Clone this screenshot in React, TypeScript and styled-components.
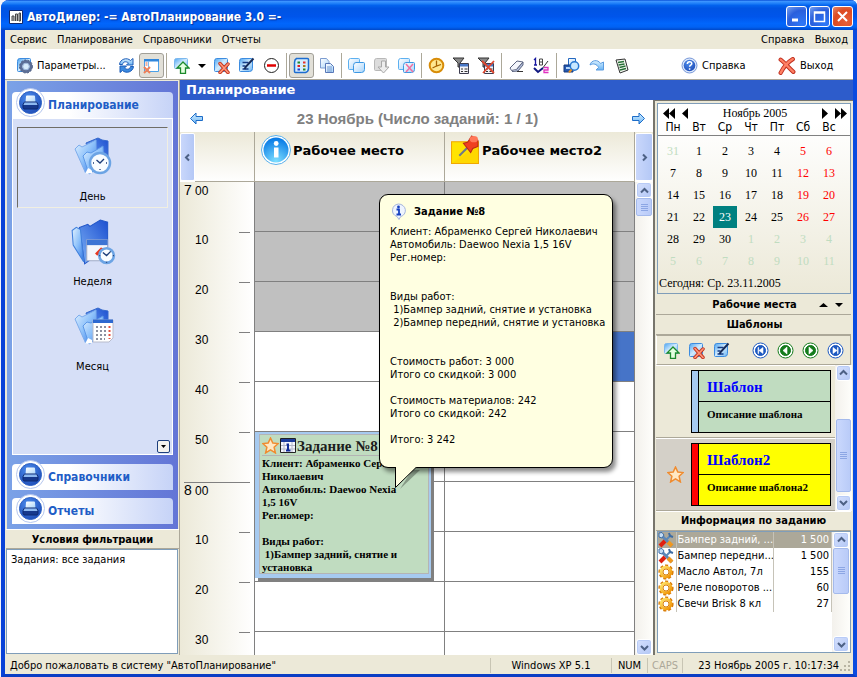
import React from "react";
import styled, { createGlobalStyle, css } from "styled-components";

const ui = '"DejaVu Sans Condensed", "Liberation Sans", sans-serif';
const wide = '"DejaVu Sans", sans-serif';
const serif = '"Liberation Serif", serif';

const Global = createGlobalStyle`
  * { box-sizing: border-box; }
  body { margin: 0; background: #f4f5fb; font: 11px/13px ${ui}; color: #000; }
  button { font: inherit; color: inherit; padding: 0; margin: 0; border: 0; background: none; }
  svg { display: block; flex: none; }
  table { border-collapse: collapse; }
`;

/* ---------- window frame ---------- */
const Frame = styled.div`
  min-height: 100vh;
  padding-left: 1px;
  display: flex;
`;
const Window = styled.div`
  flex: 1;
  min-width: 0;
  display: flex;
  flex-direction: column;
  border: solid #0a4be0;
  border-width: 0 4px 3px;
  border-left-color: #0842d8;
  border-bottom-color: #0a3ec4;
  border-radius: 8px 6px 0 0;
  background: #ece9d8;
`;
const TitleBar = styled.header`
  height: 30px;
  margin: 0 -4px;
  padding: 3px 4px 0 8px;
  display: flex;
  align-items: center;
  gap: 4px;
  border-radius: 8px 6px 0 0;
  background: linear-gradient(#0a50d8 0, #3a93ff 5%, #1c7df8 12%, #0262ee 18%, #0054e3 28%, #0055eb 56%, #0166fc 78%, #0162f4 90%, #0048c8 100%);
`;
const Title = styled.h1`
  flex: 1;
  margin: 0;
  font: bold 12px/16px ${ui};
  color: #fff;
  text-shadow: 1px 1px 1px #04309a;
  white-space: nowrap;
`;
const WinButtons = styled.div`
  display: flex;
  gap: 2px;
`;
const WinButton = styled.button<{ $close?: boolean }>`
  width: 21px;
  height: 21px;
  border: 1px solid #fff;
  border-radius: 3px;
  display: grid;
  place-items: center;
  background: ${p => p.$close
    ? "radial-gradient(circle at 70% 80%, #e8603a, #dd4a20 60%, #e48a6c)"
    : "radial-gradient(circle at 80% 90%, #2e78f8, #2a5fdc 60%, #7aa2f0)"};
`;
const MenuBar = styled.nav`
  height: 19px;
  padding: 0 5px;
  display: flex;
  align-items: center;
  gap: 10px;
`;
const MenuItem = styled.button`
  line-height: 17px;
`;
const Spacer = styled.span`
  flex: 1;
`;
const ToolBar = styled.div`
  height: 31px;
  padding: 3px 0 0 6px;
  display: flex;
  align-items: center;
  background: #fff;
  border-bottom: 1px solid #aca899;
  white-space: nowrap;
`;
const Tool = styled.button<{ $on?: boolean }>`
  width: 25px;
  height: 25px;
  flex: none;
  display: grid;
  place-items: center;
  ${p => p.$on && css`
    border: 1px solid #a19f97;
    border-radius: 3px;
    background: #e2e0d8;
  `}
`;
const Caret = styled.button`
  width: 15px;
  height: 25px;
  display: grid;
  place-items: center;
`;
const TextTool = styled.button<{ $w: number; $gap?: number }>`
  width: ${p => p.$w}px;
  margin-left: ${p => p.$gap ?? 0}px;
  display: flex;
  align-items: center;
  gap: 4px;
`;
const Sep = styled.span`
  width: 1px;
  height: 25px;
  margin: 0 2px;
  background: #aca899;
`;

const Main = styled.main`
  flex: 1;
  display: flex;
  min-height: 0;
`;

/* ---------- left column ---------- */
const Left = styled.aside`
  width: 175px;
  flex: none;
  padding: 1px 0 1px 1px;
  border-right: 1px solid #aca899;
  display: flex;
  flex-direction: column;
`;
const NavPane = styled.nav`
  margin: 0 1px;
  padding: 11px 5px 5px;
  display: flex;
  flex-direction: column;
  background: linear-gradient(90deg, #7ba2e7, #6375d6);
  height: 448px;
`;
const GroupHead = styled.button<{ $gap?: number }>`
  height: 26px;
  flex: none;
  margin-top: ${p => p.$gap ?? 0}px;
  padding-left: 4px;
  display: flex;
  align-items: center;
  gap: 3px;
  border-radius: 4px 4px 0 0;
  background: linear-gradient(90deg, #fff 35%, #c6d3f7);
  font: bold 12px/14px ${ui};
  color: #215dc6;
  svg { margin: -8px 0 -2px; }
`;
const GroupBody = styled.div`
  flex: 1;
  padding: 8px 4px 1px;
  border: 1px solid #fff;
  background: #d6dff7;
  display: flex;
  flex-direction: column;
  gap: 4px;
`;
const NavItem = styled.button<{ $on?: boolean }>`
  height: 81px;
  padding-bottom: 1px;
  display: grid;
  grid-template-rows: 1fr 20px;
  justify-items: center;
  align-items: center;
  border: 1px solid transparent;
  ${p => p.$on && css`border-color: #6f6d66 #f1efe2 #f1efe2 #6f6d66;`}
`;
const More = styled.button`
  width: 13px;
  height: 13px;
  margin: auto -2px 0 0;
  align-self: flex-end;
  border: 1px solid #1d3f7c;
  border-radius: 2px;
  background: #f4f3ee;
  display: grid;
  place-items: center;
`;
const PaneTitle = styled.label`
  display: flex;
  align-items: center;
  justify-content: center;
  height: 20px;
  margin: 0;
  flex: none;
  font: bold 11px/13px ${ui};
  border-top: 1px solid #fff;
  border-bottom: 1px solid #aca899;
`;
const Memo = styled.textarea`
  flex: 1;
  margin: 0 1px 0 0;
  padding: 3px 4px;
  resize: none;
  border: 1px solid #7f9db9;
  background: #fff;
  color: #000;
  font: 11px/13px ${ui};
  outline: 0;
`;

/* ---------- planner ---------- */
const Work = styled.div`
  flex: 1;
  min-width: 0;
  display: flex;
  flex-direction: column;
`;
const Banner = styled.h2`
  margin: 0;
  height: 20px;
  padding-left: 6px;
  background: #2d5ccb;
  color: #fff;
  font: bold 13px/20px ${wide};
`;
const WorkBody = styled.div`
  flex: 1;
  display: flex;
`;
const Planner = styled.section`
  flex: 1;
  min-width: 0;
  display: flex;
  flex-direction: column;
  background: #fff;
`;
const DateRow = styled.div`
  height: 32px;
  padding: 5px 8px 0 10px;
  display: flex;
  align-items: center;
  justify-content: space-between;
`;
const DateTitle = styled.h3`
  margin: 0;
  font: bold 15px/16px "Liberation Sans", sans-serif;
  color: #808080;
`;
const HeadRow = styled.div`
  height: 50px;
  flex: none;
  display: flex;
  background: linear-gradient(#ece9d8, #fff);
`;
const SideArrow = styled.button<{ $w: number }>`
  width: ${p => p.$w}px;
  flex: none;
  margin: 1px 0;
  border: 1px solid #fff;
  border-radius: 2px;
  background: linear-gradient(90deg, #c9d7fb, #b4c8f6);
  display: grid;
  place-items: center;
`;
const HeadCell = styled.div<{ $w?: number }>`
  ${p => p.$w ? css`width: ${p.$w}px; flex: none;` : css`flex: 1 1 0; min-width: 0;`}
  padding: 3px 5px 0 6px;
  display: flex;
  gap: 2px;
  border-right: 1px solid #aca899;
  border-bottom: 1px solid #aca899;
  font: bold 13px/32px ${wide};
  white-space: nowrap;
`;
const Schedule = styled.div`
  flex: 1 1 0;
  min-height: 0;
  display: flex;
`;
const Ruler = styled.div`
  width: 75px;
  flex: none;
  padding: 0 4px 0 4px;
  overflow: hidden;
  background: linear-gradient(90deg, #ece9d8, #fff);
  border-right: 1px solid #808080;
`;
const Mark = styled.div<{ $hour?: boolean; $first?: boolean }>`
  height: 50px;
  padding: 1px 0 0 ${p => (p.$hour ? 0 : 11)}px;
  font: 12px/14px "Liberation Sans", sans-serif;
  background: linear-gradient(#808080, #808080) no-repeat right top;
  background-size: ${p => (p.$first ? "0 0" : p.$hour ? "66px 1px" : "11px 1px")};
`;
const HourNo = styled.span`
  display: inline-block;
  width: 11px;
  font-size: 14px;
`;
const Grid = styled.div`
  flex: 1;
  min-width: 0;
  display: flex;
  position: relative;
`;
const Lane = styled.div`
  flex: 1 1 0;
  min-width: 0;
  height: 100%;
  overflow: hidden;
  border-right: 1px solid #808080;
`;
const Slot = styled.div<{ $bg?: string }>`
  height: 50px;
  border-bottom: 1px solid #808080;
  background: ${p => p.$bg ?? "#fff"};
`;
const Task = styled.article`
  position: absolute;
  left: 0;
  top: 250px;
  width: 176px;
  height: 146px;
  padding: 2px 2px 4px 4px;
  background: #a6caf0;
  box-shadow: 3px 3px 0 #808080;
  font: bold 11px/13px ${serif};
`;
const TaskCard = styled.div`
  height: 100%;
  padding: 1px 2px;
  border: 1px solid #b4b4b4;
  background: #c0dcc0;
  white-space: pre-wrap;
  overflow: hidden;
`;
const TaskHead = styled.h4`
  margin: 0 0 1px;
  height: 20px;
  display: flex;
  align-items: center;
  gap: 1px;
  border-bottom: 1px solid #b4b4b4;
  font: bold 15px/18px ${serif};
  color: #1c1c1c;
  white-space: nowrap;
`;
const Tip = styled.div`
  position: absolute;
  left: 124px;
  top: 12px;
  width: 234px;
  padding: 8px 0 21px 10px;
  border: 1px solid #000;
  border-radius: 9px;
  background: #ffffe1;
  box-shadow: 3px 4px 4px rgba(0, 0, 0, 0.45);
  white-space: pre;
  p { margin: 0; }
`;
const TipHead = styled.h4`
  margin: 0 0 6px;
  height: 16px;
  display: flex;
  align-items: center;
  gap: 7px;
  font: bold 11px/13px ${ui};
`;
const TipTail = styled.svg`
  position: absolute;
  left: 15px;
  top: 100%;
`;

/* ---------- scroll bars ---------- */
const Scroll = styled.div<{ $w: number }>`
  width: ${p => p.$w}px;
  flex: none;
  padding: 0 1px;
  display: flex;
  flex-direction: column;
  background: linear-gradient(90deg, #f3f1ec, #fefefb);
`;
const ScrollButton = styled.button`
  height: 16px;
  flex: none;
  border: 1px solid #fff;
  border-radius: 3px;
  background: linear-gradient(135deg, #d5e0fd, #b4c8f6);
  box-shadow: inset 0 0 0 1px #b8cbf6;
  display: grid;
  place-items: center;
`;
const Thumb = styled.div<{ $h: number }>`
  height: ${p => p.$h}px;
  border: 1px solid #a4baec;
  border-radius: 2px;
  background: linear-gradient(90deg, #cad8fd, #b9cbf8);
  display: grid;
  place-items: center;
`;
const Track = styled.div<{ $top: number }>`
  flex: 1;
  padding-top: ${p => p.$top}px;
`;

/* ---------- right column ---------- */
const Right = styled.aside`
  width: 200px;
  flex: none;
  padding: 1px 2px 2px 1px;
  border: solid #77756c;
  border-width: 1px 0 0 2px;
  display: flex;
  flex-direction: column;
  background: #ece9d8;
`;
const Calendar = styled.section`
  margin: 1px 0 1px 1px;
  border: 1px solid #7f9db9;
  background: linear-gradient(#fff 10%, #ece9d8);
  font: 12px/14px ${serif};
`;
const CalHead = styled.div`
  height: 16px;
  padding: 2px 3px 0 5px;
  display: flex;
  align-items: center;
  gap: 7px;
`;
const Month = styled.span`
  flex: 1;
  text-align: center;
`;
const Days = styled.table`
  width: 100%;
  table-layout: fixed;
  text-align: center;
  th { height: 15px; padding: 0; font: 12px/14px ${ui}; }
  thead { border-bottom: 1px solid #808080; }
  tbody::before { content: ""; display: block; height: 4px; }
  td { height: 22px; padding: 0; }
  th:first-child { width: 28px; }
  th:last-child { width: 34px; }
  th:first-child, td:first-child { padding-left: 2px; }
  th:last-child, td:last-child { padding-right: 8px; }
`;
const Day = styled.button<{ $kind: string }>`
  width: 24px;
  height: 22px;
  font: 12px/22px ${serif};
  color: ${p => ({ out: "#c0dcc0", off: "#f00", on: "#fff" } as Record<string, string>)[p.$kind] ?? "#000"};
  ${p => p.$kind === "on" && css`background: #008080;`}
`;
const Today = styled.div`
  padding: 4px 0 3px 1px;
`;
const Bar = styled.div`
  height: 20px;
  flex: none;
  padding: 1px 0 0 2px;
  display: grid;
  grid-template-columns: 32px 1fr 32px;
  align-items: center;
  text-align: center;
  font: bold 11px/13px ${ui};
  border-bottom: 1px solid #aca899;
`;
const Arrows = styled.span`
  display: flex;
  gap: 7px;
`;
const Tools = styled.div`
  height: 30px;
  flex: none;
  padding: 1px 2px 0;
  display: flex;
  align-items: center;
  border: 1px solid #aca899;
  border-left-color: #fff;
`;
const Templates = styled.div`
  height: 146px;
  flex: none;
  display: flex;
`;
const TemplateList = styled.ul`
  flex: 1;
  margin: 0;
  padding: 0;
  list-style: none;
`;
const Template = styled.li<{ $on?: boolean }>`
  height: 73px;
  padding: 0 4px 0 11px;
  display: grid;
  grid-template-columns: 24px 140px;
  align-items: center;
  border-bottom: 1px solid #aca899;
  border-top: 1px solid #fff;
  background: ${p => (p.$on ? "#d4d0c8" : "#ece9d8")};
`;
const Card = styled.article<{ $bar: string; $bg: string }>`
  grid-column: 2;
  height: 63px;
  display: grid;
  grid-template-rows: 31px 1fr;
  border: 1px solid #000;
  border-left: 0;
  background: ${p => p.$bg};
  box-shadow: inset 1px 0 #000, inset 7px 0 ${p => p.$bar}, inset 8px 0 #000;
`;
const CardTitle = styled.h4`
  margin: 0 0 0 8px;
  padding: 7px 0 0 8px;
  border-bottom: 1px solid #000;
  font: bold 15px/18px ${serif};
  color: #00f;
`;
const CardNote = styled.p`
  margin: 0 0 0 16px;
  padding-top: 6px;
  font: bold 11px/13px ${serif};
`;
const InfoBox = styled.div`
  flex: 1;
  margin-left: 1px;
  display: flex;
  border: 1px solid #7f9db9;
  background: #fff;
`;
const InfoArea = styled.div`
  flex: 1;
`;
const Info = styled.table`
  width: 100%;
  table-layout: fixed;
  td {
    height: 16px;
    padding: 0 2px;
    border-right: 1px solid #c6c3b8;
    white-space: nowrap;
    overflow: hidden;
  }
  td:first-child { width: 18px; padding: 0; }
  td:nth-child(2) { padding: 0 0 0 1px; }
  td:last-child { width: 58px; text-align: right; }
`;
const InfoRow = styled.tr<{ $on?: boolean }>`
  ${p => p.$on && css`background: #aca899; color: #fff;`}
`;
const Status = styled.footer`
  height: 19px;
  flex: none;
  padding: 2px 1px 0 5px;
  display: flex;
  align-items: center;
  white-space: nowrap;
`;
const Panel = styled.span<{ $w?: number; $dim?: boolean; $end?: boolean }>`
  ${p => p.$w ? css`width: ${p.$w}px;` : css`flex: 1;`}
  text-align: ${p => (p.$end ? "right" : p.$w ? "center" : "left")};
  line-height: 15px;
  color: ${p => (p.$dim ? "#aca899" : "#000")};
  border-right: ${p => (p.$end ? "0" : "1px solid #c8c5b4")};
`;

/* ---------- icons ---------- */
const Defs = () => (
  <svg width="0" height="0" style={{ position: "absolute" }} aria-hidden="true">
    <defs>
      <linearGradient id="doc" x1="0" y1="0" x2="1" y2="1"><stop offset="0" stopColor="#4ba4f2" /><stop offset="0.5" stopColor="#d2ebfd" /><stop offset="1" stopColor="#6ab4f4" /></linearGradient>
      <linearGradient id="page" x1="0" y1="0" x2="1" y2="1"><stop offset="0" stopColor="#fff" /><stop offset="1" stopColor="#a8d4fa" /></linearGradient>
      <linearGradient id="folder" x1="0" y1="0" x2="1" y2="1"><stop offset="0" stopColor="#e2f2ff" /><stop offset="0.5" stopColor="#8cc0fa" /><stop offset="1" stopColor="#2f74e4" /></linearGradient>
      <linearGradient id="folderDark" x1="0" y1="1" x2="1" y2="0"><stop offset="0" stopColor="#7eb2f6" /><stop offset="1" stopColor="#1c4fd0" /></linearGradient>
      <radialGradient id="ball" cx="0.4" cy="0.3" r="0.8"><stop offset="0" stopColor="#4c8cec" /><stop offset="1" stopColor="#1a48b4" /></radialGradient>
      <radialGradient id="info" cx="0.5" cy="0.95" r="0.9"><stop offset="0" stopColor="#7fe0ff" /><stop offset="1" stopColor="#0a7ce6" /></radialGradient>
      <linearGradient id="gold" x1="0" y1="0" x2="1" y2="1"><stop offset="0" stopColor="#ffe66a" /><stop offset="1" stopColor="#f09000" /></linearGradient>
      <linearGradient id="arrow" x1="0" y1="0" x2="0" y2="1"><stop offset="0" stopColor="#d8f0ff" /><stop offset="1" stopColor="#6ab4f4" /></linearGradient>
    </defs>
  </svg>
);
const I = ({ s = 17, v = 17, children }: { s?: number; v?: number; children: React.ReactNode }) => (
  <svg width={s} height={s} viewBox={`0 0 ${v} ${v}`} fill="none" aria-hidden="true">{children}</svg>
);
const docShape = <path d="M3.500 1.500h10q1 0 1 1v9q0 3-3 3h-9q-1 0-1-1v-9q0-3 2-3z" fill="url(#doc)" stroke="#3c8ce0" />;
const redX = <g strokeLinecap="round"><path d="M7 6.500l8 9M15 7l-8 8.500" stroke="#c03018" strokeWidth="3.400" /><path d="M7 6.500l8 9M15 7l-8 8.500" stroke="#ff9478" strokeWidth="1.800" /></g>;

const AddIcon = () => <I><path d="M3.500 1.500h10q1 0 1 1v9h-12q-1 0-1-1v-7q0-2 2-2z" fill="url(#doc)" stroke="#7cb8ee" /><path d="M10 5l6 6h-3.500v5.500h-5V11H4z" fill="#e4ffe0" stroke="#1c8a2c" strokeWidth="1.300" /></I>;
const DeleteIcon = () => <I>{docShape}{redX}</I>;
const EditIcon = () => <I>{docShape}<path d="M4.500 5.500h6M4.500 12h6M4.500 9h3" stroke="#153c88" strokeWidth="1.300" /><path d="M15.500 1.500l-7.500 8-1.500 2.500" stroke="#152a58" strokeWidth="2" /></I>;
const GearIcon = () => <I>{docShape}<circle cx="10" cy="9.500" r="5" stroke="#5c6e96" strokeWidth="3" /><circle cx="10" cy="9.500" r="6.500" stroke="#46587e" strokeDasharray="2 1.500" /><circle cx="10" cy="9.500" r="3.300" fill="#d8ecfc" stroke="#9cb4d8" /></I>;
const RefreshIcon = () => <I><path d="M1.500 7.500C2 2 9 0 12.500 3.500L15 1.500V8H8.500L10.500 6C8 4 5 4.500 4.500 7.500z" fill="url(#arrow)" stroke="#1c5cb8" /><path d="M15.500 9.500C15 15 8 17 4.500 13.500L2 15.500V9h6.500L6.500 11C9 13 12 12.500 12.500 9.500z" fill="#3a8ae0" stroke="#1c5cb8" /></I>;
const PaneIcon = () => <I><path d="M1.500 2.500h14v12h-14z" fill="#fff" stroke="#4aa0e8" /><path d="M1 2h15v2.500H1z" fill="#2f86dc" /><path d="M5.500 4v10" stroke="#80b8ec" /><path d="M2.500 6h2M2.500 8h2" stroke="#e06040" /><path d="M1 10l6 6M7 10l-6 6" stroke="#f08058" strokeWidth="2" /></I>;
const MinusIcon = () => <I><circle cx="8.500" cy="8.500" r="7" fill="#fff" stroke="#222" /><path d="M4 8.500h9" stroke="#e00000" strokeWidth="2.500" /></I>;
const ListIcon = () => <I><path d="M3.500 1.500h11q1 0 1 1v9q0 3-3 4h-10q-1 0-1-1v-9q0-3 2-4z" fill="#d4ecff" stroke="#1c6cd0" strokeWidth="1.500" /><path d="M4.500 4.500h2.500v2H4.500zM10 11.500h2.500v2H10z" fill="#208830" /><path d="M4.500 8h2.500v2H4.500z" fill="#e02020" /><path d="M10 4.500h2.500v2H10z" fill="#e83030" /><path d="M10 8h2.500v2H10z" fill="#b07820" /><path d="M4.500 11.500h2.500v2H4.500z" fill="#2040d0" /></I>;
const PagesIcon = () => <I><path d="M2.500 1.500h6l2.500 3V11H2.500z" fill="url(#page)" stroke="#7c9cd0" /><path d="M7.500 6.500h5l3 3v6h-8z" fill="url(#page)" stroke="#5878b8" /><path d="M9 10h5M9 12h5M9 14h5" stroke="#7098d0" /></I>;
const copyShape = <><path d="M2.500 1.500h8q1 0 1 1v7q0 3-3 3h-7q-1 0-1-1V4q0-2.500 2-2.500z" fill="url(#page)" stroke="#5cb0f0" /><path d="M8 5.500h7.500q1 0 1 1v6q0 3-3 3h-7q-1 0-1-1v-6q0-3 2.500-3z" fill="url(#page)" stroke="#3c98e4" /></>;
const CopyIcon = () => <I>{copyShape}</I>;
const CopyXIcon = () => <I>{copyShape}<path d="M8 7l7 8M15 7l-7 8" stroke="#f070a0" strokeWidth="1.500" /></I>;
const DownIcon = () => <I><path d="M3.500 1.500h9q1 0 1 1v8q0 3-3 3h-8q-1 0-1-1V4q0-2.500 2-2.500z" fill="#dcdcdc" stroke="#b8b8b8" /><path d="M8.500 4h4v6H16l-5.500 6L5 10h3.500z" fill="#ededed" stroke="#a8a8a8" /></I>;
const ClockIcon = () => <I><circle cx="8.500" cy="8.500" r="6.800" fill="#ffe890" stroke="#d88c08" strokeWidth="2" /><path d="M8.500 3.500v5.500l4.500-1.500M8.500 9l-4 2" stroke="#a86400" strokeWidth="1.300" /></I>;
const filterShape = <><path d="M0 1h11L7 6v4H5V6z" fill="#888" stroke="#333" /><path d="M6.500 6.500h9v10h-9z" fill="#f4f4f8" stroke="#3c3c50" /><path d="M7 7h8v2.500H7z" fill="#4878c8" /><path d="M8 12h2M11.500 12h3M8 14.500h2M11.500 14.500h3" stroke="#333" /></>;
const FilterIcon = () => <I>{filterShape}</I>;
const FilterXIcon = () => <I>{filterShape}<path d="M4 4l12 12M16 4L5 16" stroke="#e04830" strokeWidth="1.800" /></I>;
const EraserIcon = () => <I><path d="M2 11l7-7 6 1-6.500 7.500-5 1z" fill="#f4f6fc" stroke="#5c6480" /><path d="M8.500 12.500L15 5v3l-5 6-6 .5" fill="#b4c0dc" stroke="#5c6480" /><path d="M9 14.500h6" stroke="#333" /></I>;
const NumbersIcon = () => <I><path d="M1 3l1.500-1.500V8M1 8h3" stroke="#1818a0" strokeWidth="1.300" /><path d="M6.500 2h3v6h-3zM6.500 5h3" stroke="#444" /><path d="M15 4L9 12" stroke="#333" /><path d="M1 11l4 4 5-4" stroke="#101880" strokeWidth="2" /><path d="M11 10.500h4v2.500h-4v2.500h4.500" stroke="#e030c0" strokeWidth="1.300" /></I>;
const SearchIcon = () => <I><path d="M5.500 1.500h7v7h-7z" fill="url(#page)" stroke="#2468c0" /><path d="M1 8h9v7H1z" fill="#2458b0" stroke="#14387c" /><path d="M3 11h5" stroke="#b8d8fc" strokeWidth="2" /><circle cx="11.500" cy="9" r="4.200" fill="#c8e8ff" stroke="#2878d0" strokeWidth="1.500" /><path d="M8.500 12.500L6 15.500" stroke="#e89020" strokeWidth="2" /></I>;
const RedoIcon = () => <I><path d="M2 8c1-5 8-6 10.500-1.500L15.500 5v8H8l2.500-2.500C9 7 5 6 2 8z" fill="url(#arrow)" stroke="#5c9ce0" /></I>;
const SheetIcon = () => <I><path d="M3 3l9-1 3 11-8 3z" fill="#f4f8f0" stroke="#333" /><path d="M5 5.500l6-1M5.500 8l6-1M6.500 10.500l6-1.500M7 13l6-1.500" stroke="#287038" strokeWidth="1.300" /></I>;
const HelpIcon = () => <I><circle cx="8.500" cy="8.500" r="7.500" fill="#dce8fc" stroke="#7898d8" /><circle cx="8.500" cy="8.500" r="5.800" fill="url(#ball)" /><path d="M6.300 7c0-3 4.500-3 4.500-.4 0 1.600-2.200 1.600-2.200 3.200M8.600 11.200v1.500" stroke="#fff" strokeWidth="1.500" /></I>;
const CloseIcon = () => <I s={18}><g strokeLinecap="round"><path d="M2.500 2.500c4 3 8 8 12 11.500M14 2C9 5 5 10 2.500 15" stroke="#c03020" strokeWidth="4" /><path d="M2.500 2.500c4 3 8 8 12 11.500M14 2C9 5 5 10 2.500 15" stroke="#ff8064" strokeWidth="2.200" /></g></I>;
const Tri = ({ d = "M0 0h8L4 4z", w = 8, h = 4 }: { d?: string; w?: number; h?: number }) => <svg width={w} height={h} viewBox={`0 0 ${w} ${h}`} aria-hidden="true"><path d={d} /></svg>;
const Chevron = ({ d }: { d: string }) => <I s={9} v={9}><path d={d} stroke="#4d6185" strokeWidth="2" /></I>;
const UP = "M1 6.500l3.500-3.500L8 6.500", DOWN = "M1 3l3.500 3.500L8 3", LEFT = "M6 1.500L3 4.500l3 3", RIGHT = "M3 1.500l3 3-3 3";
const Grip = () => <I s={7} v={7}><path d="M0 .5h7M0 2.500h7M0 4.500h7M0 6.500h7" stroke="#8ca6e4" /></I>;
const BlueArrow = ({ flip }: { flip?: boolean }) => (
  <svg width="13" height="13" viewBox="0 0 13 13" aria-hidden="true"><path d={flip ? "M12.500 6.500L7 1v3.500H.5v4H7V12z" : "M.5 6.500L6 1v3.500h6.500v4H6V12z"} fill="url(#arrow)" stroke="#1c6cc8" /></svg>
);
const Printer = () => (
  <I s={29} v={29}>
    <circle cx="14.500" cy="14.500" r="14" fill="#fff" stroke="#b4c6ee" />
    <circle cx="14.500" cy="14.500" r="11" fill="url(#ball)" stroke="#2c60c4" />
    <path d="M11 7.500h7q1 0 1 1l.5 6h-10l.5-6q0-1 1-1z" fill="url(#page)" />
    <path d="M8.500 14h12l1.500 2.500v3l-1 1.500H8l-1-1.500v-3z" fill="#16388c" stroke="#0c2870" />
    <path d="M8.500 14.500h12l1 2.500h-14z" fill="#8cb8f0" />
  </I>
);
const folderShape = <>
  <path d="M14 7l12-5 4 2 6 1v16L22 34z" fill="url(#folderDark)" stroke="#3468cc" />
  <path d="M3 13l4-4 3 2 14-7v20L14 38z" fill="url(#folder)" stroke="#7cacec" />
  <path d="M11 20l4-4 4 1 12-7 1 18-15 10z" fill="url(#folder)" stroke="#5c98e8" />
  <path d="M13 38l3-6 4 2v3z" fill="#fff" />
</>;
const dial = (x: number, y: number, r: number) => <><circle cx={x} cy={y} r={r} fill="#f8fcff" stroke="#6ca4e4" strokeWidth="2.500" /><path d={`M${x - 3.500} ${y - 3}l3.500 3 4-4M${x - 7} ${y}h1M${x + 6} ${y}h1M${x} ${y + 6}v1`} stroke="#1c3c78" strokeWidth="1.300" /></>;
const DayIcon = () => <I s={42} v={42}>{folderShape}{dial(28, 27, 10)}</I>;
const WeekIcon = () => <svg width="46" height="48" viewBox="0 0 44 46" fill="none" aria-hidden="true"><path d="M9 9l8-3 2 2 10-6 7 2v24L14 44z" fill="url(#folderDark)" stroke="#2458c8" /><path d="M2 12l4-3 4 2 3 31L3 26z" fill="url(#folder)" stroke="#4080dc" /><path d="M16 21h20v20H16z" fill="#f4f6fc" stroke="#a0acc8" /><path d="M16 21h20v5H16z" fill="#3c74d4" /><path d="M25 35l5-5 3 1M27 35h5" stroke="#e83820" strokeWidth="3" />{dial(35, 36, 7)}</svg>;
const MonthIcon = () => <I s={42} v={42}>{folderShape}<path d="M21 14h20v18l-4 4H21z" fill="#fff" stroke="#b8bccc" /><path d="M21 13.500h20V17H21z" fill="#2c68d0" /><path d="M24 21h12M24 25h12M24 29h12M24 33h9" stroke="#8c90a0" strokeWidth="2" strokeDasharray="2 2" /><path d="M37.500 20v13" stroke="#e85040" strokeWidth="2" strokeDasharray="2 2" /></I>;
const InfoIcon = () => <I s={30} v={30}><circle cx="15" cy="15" r="14.500" fill="#fff" stroke="#58b0ec" /><circle cx="15" cy="15" r="12.500" fill="url(#info)" /><path d="M13 12.500h4.500v10H13z" fill="#fff" /><circle cx="15.200" cy="8.500" r="2.400" fill="#fff" /></I>;
const PinIcon = () => <I s={29} v={28}><path d="M.5 6.500h26v21H.5z" fill="#ffe400" stroke="#f0a800" /><path d="M1 27L26 10v17z" fill="#ffd000" opacity="0.600" /><path d="M8 20l8-8" stroke="#707888" strokeWidth="2" /><path d="M12 8l4-1 4-6 6 4v6l-5 2-2 4z" fill="#f04020" stroke="#b82818" /><ellipse cx="22" cy="4" rx="4" ry="3" fill="#ff7858" /></I>;
const Star = () => <I s={17} v={16}><path d="M8 1l2.200 4.700 5 .5-3.800 3.400L12.600 15 8 12.200 3.400 15l1.200-5.400L.8 6.200l5-.5z" fill="#ffe8c4" stroke="#f08c30" strokeWidth="1.400" /></I>;
const OneIcon = () => <I s={16} v={16}><path d="M.5.500h15v14H.5z" fill="#f4f6ff" stroke="#222" /><path d="M1 1h14v3H1z" fill="#1c3c9c" /><path d="M1 7.500h14M1 11h14M4 4v10M12 4v10" stroke="#b4b8c8" /><path d="M6.500 6.500H8V12M6 12.500h4.500" stroke="#102c98" strokeWidth="2" /></I>;
const BubbleIcon = () => <I s={17}><path d="M8.500 1a7 6.500 0 0 1 2 12.700L9 16.500l-2-3A7 6.500 0 0 1 8.500 1z" fill="#eef4ff" stroke="#a4b4dc" /><circle cx="8.500" cy="4" r="1.400" fill="#1440c0" /><path d="M6.500 6.500h2.500v5M6.500 11.500h4.500" stroke="#1440c0" strokeWidth="1.800" /></I>;
const ToolsIcon = () => <I s={16} v={16}><path d="M2 2l12 12" stroke="#5c88b8" strokeWidth="3" /><path d="M1 1l3-.5L6 3 4 6 1 5z" fill="#c4dcf4" stroke="#3c6ca4" /><path d="M13 3l-5 5" stroke="#5c88b8" strokeWidth="2" /><path d="M11 1l1 3 3 1" stroke="#3c6ca4" strokeWidth="2" /><path d="M7 9l-5 5" stroke="#e02010" strokeWidth="4" /><path d="M10 10l4 4" stroke="#f09820" strokeWidth="4" /></I>;
const CogIcon = () => <I s={16} v={16}><circle cx="8" cy="8" r="6.600" stroke="#d87c08" strokeWidth="2" strokeDasharray="3 2" /><circle cx="8" cy="8" r="4.800" stroke="url(#gold)" strokeWidth="3" /><circle cx="8" cy="8" r="3" fill="#fff" stroke="#d88010" /></I>;
const Media = ({ c, d }: { c: string; d: string }) => <I><circle cx="8.500" cy="8.500" r="7.500" fill="#fff" stroke={c} /><circle cx="8.500" cy="8.500" r="5" fill={c} stroke={c} /><path d={d} fill="#fff" stroke="#fff" strokeWidth="0.600" /></I>;

/* ---------- data ---------- */
const marks = ["7", "10", "20", "30", "40", "50", "8", "10", "20", "30"];
const weekdays = ["Пн", "Вт", "Ср", "Чт", "Пт", "Сб", "Вс"];
const weeks = Array.from({ length: 6 }, (_, w) =>
  Array.from({ length: 7 }, (_, d) => {
    const n = w * 7 + d;
    const day = n === 0 ? 31 : n > 30 ? n - 30 : n;
    const kind = n === 0 || n > 30 ? "out" : n === 23 ? "on" : d > 4 ? "off" : "day";
    return { day, kind };
  }));
const works = [
  { name: "Бампер задний, ...", sum: "1 500", icon: <ToolsIcon />, on: true },
  { name: "Бампер передни...", sum: "1 500", icon: <ToolsIcon /> },
  { name: "Масло Автол, 7л", sum: "155", icon: <CogIcon /> },
  { name: "Реле поворотов ...", sum: "60", icon: <CogIcon /> },
  { name: "Свечи Brisk 8 кл", sum: "27", icon: <CogIcon /> },
];
const taskText = "Клиент: Абраменко Сергей Николаевич\nАвтомобиль: Daewoo Nexia\n1,5 16V\nРег.номер:\n\nВиды работ:\n 1)Бампер задний, снятие и установка";
const tipText = "Клиент: Абраменко Сергей Николаевич\nАвтомобиль: Daewoo Nexia 1,5 16V\nРег.номер:\n\n\nВиды работ:\n 1)Бампер задний, снятие и установка\n 2)Бампер передний, снятие и установка\n\n\nСтоимость работ: 3 000\nИтого со скидкой: 3 000\n\nСтоимость материалов: 242\nИтого со скидкой: 242\n\nИтого: 3 242";

const ScrollBar = ({ w, top, thumb }: { w: number; top: number; thumb: number }) => (
  <Scroll $w={w}>
    <ScrollButton aria-label="Вверх"><Chevron d={UP} /></ScrollButton>
    <Track $top={top}><Thumb $h={thumb}><Grip /></Thumb></Track>
    <ScrollButton aria-label="Вниз"><Chevron d={DOWN} /></ScrollButton>
  </Scroll>
);
const T = ({ label, on, children }: { label: string; on?: boolean; children: React.ReactNode }) => (
  <Tool $on={on} aria-label={label} aria-pressed={on}>{children}</Tool>
);

export default function App() {
  return (
    <Frame>
      <Global />
      <Defs />
      <Window>
        <TitleBar>
          <I s={14} v={14}><path d="M.5.500h13v13H.5z" fill="#fff" stroke="#10286c" /><path d="M3 11V6h2v5M6.500 11V4h2v7M10 11V3h1.500v8z" fill="#b8b8b8" stroke="#444" /></I>
          <Title>АвтоДилер: -= АвтоПланирование 3.0 =-</Title>
          <WinButtons>
            <WinButton aria-label="Свернуть"><I s={13} v={13}><path d="M2 10h6" stroke="#fff" strokeWidth="3" /></I></WinButton>
            <WinButton aria-label="Развернуть"><I s={13} v={13}><path d="M1.500 2h10v9.500h-10zM1 3h11" stroke="#fff" strokeWidth="1.500" /></I></WinButton>
            <WinButton $close aria-label="Закрыть"><I s={13} v={13}><path d="M2 2l9 9M11 2l-9 9" stroke="#fff" strokeWidth="2" /></I></WinButton>
          </WinButtons>
        </TitleBar>
        <MenuBar>
          <MenuItem>Сервис</MenuItem><MenuItem>Планирование</MenuItem><MenuItem>Справочники</MenuItem><MenuItem>Отчеты</MenuItem>
          <Spacer />
          <MenuItem>Справка</MenuItem><MenuItem>Выход</MenuItem>
        </MenuBar>
        <ToolBar>
          <TextTool $w={98} $gap={5}><GearIcon />Параметры...</TextTool>
          <T label="Обновить"><RefreshIcon /></T>
          <T label="Панель" on><PaneIcon /></T>
          <Sep />
          <T label="Добавить"><AddIcon /></T>
          <Caret aria-label="Ещё"><Tri /></Caret>
          <T label="Удалить"><DeleteIcon /></T>
          <T label="Изменить"><EditIcon /></T>
          <T label="Запрет"><MinusIcon /></T>
          <Sep />
          <T label="Список" on><ListIcon /></T>
          <T label="Страницы"><PagesIcon /></T>
          <Sep />
          <T label="Копировать"><CopyIcon /></T>
          <T label="Вставить"><DownIcon /></T>
          <T label="Очистить"><CopyXIcon /></T>
          <Sep />
          <T label="Время"><ClockIcon /></T>
          <T label="Фильтр"><FilterIcon /></T>
          <T label="Снять фильтр"><FilterXIcon /></T>
          <Sep />
          <T label="Стереть"><EraserIcon /></T>
          <T label="Нумерация"><NumbersIcon /></T>
          <Sep />
          <T label="Найти"><SearchIcon /></T>
          <T label="Повторить"><RedoIcon /></T>
          <T label="Отчет"><SheetIcon /></T>
          <TextTool $w={97} $gap={47}><HelpIcon />Справка</TextTool>
          <TextTool $w={60}><CloseIcon />Выход</TextTool>
        </ToolBar>
        <Main>
          <Left>
            <NavPane>
              <GroupHead><Printer />Планирование</GroupHead>
              <GroupBody>
                <NavItem $on><DayIcon />День</NavItem>
                <NavItem><WeekIcon />Неделя</NavItem>
                <NavItem><MonthIcon />Месяц</NavItem>
                <More aria-label="Ещё"><Tri d="M0 0h5L2.500 3z" w={5} h={3} /></More>
              </GroupBody>
              <GroupHead $gap={9}><Printer />Справочники</GroupHead>
              <GroupHead $gap={8}><Printer />Отчеты</GroupHead>
            </NavPane>
            <PaneTitle htmlFor="filter">Условия фильтрации</PaneTitle>
            <Memo id="filter" readOnly value="Задания: все задания" />
          </Left>
          <Work>
            <Banner>Планирование</Banner>
            <WorkBody>
              <Planner>
                <DateRow>
                  <button aria-label="Предыдущий день"><BlueArrow /></button>
                  <DateTitle>23 Ноябрь (Число заданий: 1 / 1)</DateTitle>
                  <button aria-label="Следующий день"><BlueArrow flip /></button>
                </DateRow>
                <HeadRow>
                  <SideArrow $w={15} aria-label="Влево"><Chevron d={LEFT} /></SideArrow>
                  <HeadCell $w={60} />
                  <HeadCell><InfoIcon />Рабочее место</HeadCell>
                  <HeadCell><PinIcon />Рабочее место2</HeadCell>
                  <SideArrow $w={18} aria-label="Вправо"><Chevron d={RIGHT} /></SideArrow>
                </HeadRow>
                <Schedule>
                  <Ruler>
                    {marks.map((m, i) => m.length === 1
                      ? <Mark key={i} $hour $first={i === 0}><HourNo>{m}</HourNo>00</Mark>
                      : <Mark key={i}>{m}</Mark>)}
                  </Ruler>
                  <Grid>
                    <Lane>{marks.map((_, i) => <Slot key={i} $bg={i < 3 ? "#c0c0c0" : undefined} />)}</Lane>
                    <Lane>{marks.map((_, i) => <Slot key={i} $bg={i < 3 ? "#c0c0c0" : i === 3 ? "#4674c8" : undefined} />)}</Lane>
                    <Task>
                      <TaskCard>
                        <TaskHead><Star /><OneIcon />Задание №8</TaskHead>
                        {taskText}
                      </TaskCard>
                    </Task>
                    <Tip role="tooltip">
                      <TipHead><BubbleIcon />Задание №8</TipHead>
                      <p>{tipText}</p>
                      <TipTail width="26" height="24" viewBox="0 0 26 24">
                        <path d="M5 22L25 3h-8z" fill="#000" opacity="0.300" />
                        <path d="M.5-1v21.500L21.500 0V-1z" fill="#ffffe1" />
                        <path d="M.5 0v20.500L21.500 0" fill="none" stroke="#000" />
                      </TipTail>
                    </Tip>
                  </Grid>
                  <ScrollBar w={18} top={0} thumb={18} />
                </Schedule>
              </Planner>
              <Right>
                <Calendar>
                  <CalHead>
                    <button aria-label="Предыдущий год"><Tri d="M6 0v11L0 5.500zM12 0v11L6 5.500z" w={12} h={11} /></button>
                    <button aria-label="Предыдущий месяц"><Tri d="M6 0v11L0 5.500z" w={6} h={11} /></button>
                    <Month>Ноябрь 2005</Month>
                    <button aria-label="Следующий месяц"><Tri d="M0 0v11l6-5.500z" w={6} h={11} /></button>
                    <button aria-label="Следующий год"><Tri d="M0 0v11l6-5.500zM6 0v11l6-5.500z" w={12} h={11} /></button>
                  </CalHead>
                  <Days>
                    <thead><tr>{weekdays.map(d => <th key={d}>{d}</th>)}</tr></thead>
                    <tbody>
                      {weeks.map((w, i) => <tr key={i}>{w.map((d, j) => <td key={j}><Day $kind={d.kind}>{d.day}</Day></td>)}</tr>)}
                    </tbody>
                  </Days>
                  <Today>Сегодня: Ср. 23.11.2005</Today>
                </Calendar>
                <Bar>
                  <span />Рабочие места
                  <Arrows>
                    <button aria-label="Свернуть"><Tri d="M4.500 0L9 4H0z" w={9} h={4} /></button>
                    <button aria-label="Развернуть"><Tri /></button>
                  </Arrows>
                </Bar>
                <Bar><span />Шаблоны<span /></Bar>
                <Tools>
                  <T label="Добавить"><AddIcon /></T>
                  <T label="Удалить"><DeleteIcon /></T>
                  <T label="Изменить"><EditIcon /></T>
                  <Spacer />
                  <T label="Первый"><Media c="#1c58c0" d="M11 5.500v6L7 8.500zM6 5.500h.6v6H6z" /></T>
                  <T label="Назад"><Media c="#147c1c" d="M10 5v7L6 8.500z" /></T>
                  <T label="Вперед"><Media c="#147c1c" d="M7 5v7l4-3.500z" /></T>
                  <T label="Последний"><Media c="#1c58c0" d="M6 5.500v6l4-3zM10.500 5.500h.6v6h-.6z" /></T>
                </Tools>
                <Templates>
                  <TemplateList>
                    <Template>
                      <Card $bar="#a6caf0" $bg="#c0dcc0"><CardTitle>Шаблон</CardTitle><CardNote>Описание шаблона</CardNote></Card>
                    </Template>
                    <Template $on>
                      <Star />
                      <Card $bar="#f00" $bg="#ff0"><CardTitle>Шаблон2</CardTitle><CardNote>Описание шаблона2</CardNote></Card>
                    </Template>
                  </TemplateList>
                  <ScrollBar w={17} top={38} thumb={73} />
                </Templates>
                <PaneTitle as="h3">Информация по заданию</PaneTitle>
                <InfoBox>
                  <InfoArea>
                    <Info>
                      <tbody>
                        {works.map(w => (
                          <InfoRow key={w.name} $on={w.on}><td>{w.icon}</td><td>{w.name}</td><td>{w.sum}</td></InfoRow>
                        ))}
                      </tbody>
                    </Info>
                  </InfoArea>
                  <ScrollBar w={18} top={0} thumb={46} />
                </InfoBox>
              </Right>
            </WorkBody>
          </Work>
        </Main>
        <Status>
          <Panel>Добро пожаловать в систему "АвтоПланирование"</Panel>
          <Panel $w={121}>Windows XP 5.1</Panel>
          <Panel $w={36}>NUM</Panel>
          <Panel $w={35} $dim>CAPS</Panel>
          <Panel $w={156} $end>23 Ноябрь 2005 г. 10:17:34</Panel>
          <I s={13} v={13}><path d="M9 2h2v2H9zM5 6h2v2H5zM9 6h2v2H9zM1 10h2v2H1zM5 10h2v2H5zM9 10h2v2H9z" fill="#b8b4a2" /></I>
        </Status>
      </Window>
    </Frame>
  );
}
